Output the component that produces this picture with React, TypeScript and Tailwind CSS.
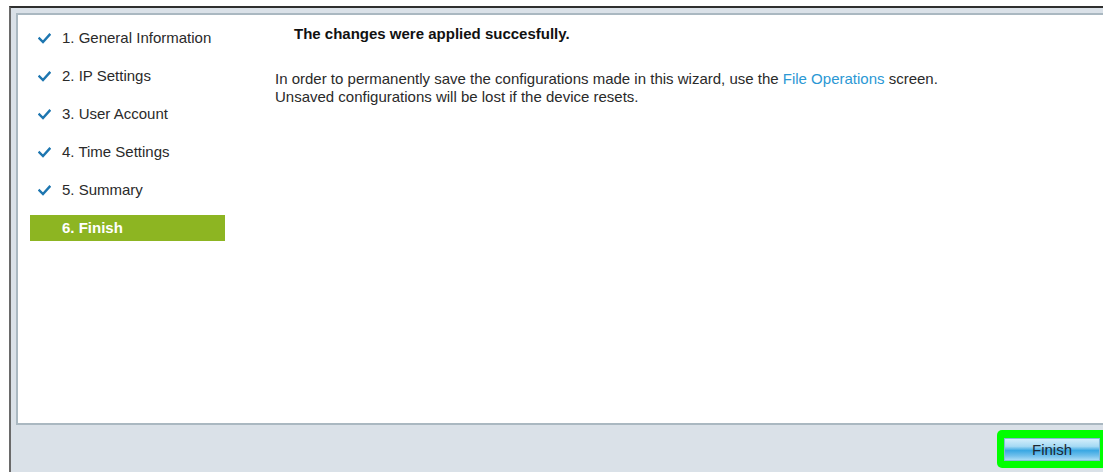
import React from "react";

const steps = [
  "1. General Information",
  "2. IP Settings",
  "3. User Account",
  "4. Time Settings",
  "5. Summary",
];

function Check() {
  return (
    <svg width="13" height="11" viewBox="0 0 13 11" className="shrink-0">
      <path
        d="M1.5 5.5 L5 9 L11.5 1.8"
        fill="none"
        stroke="#1d76b0"
        strokeWidth="2.4"
        strokeLinecap="square"
      />
    </svg>
  );
}

export default function App() {
  return (
    <div
      className="w-[1103px] h-[472px] overflow-hidden bg-white text-[15px] text-[#2a2a2a]"
      style={{ fontFamily: '"Liberation Sans", Arial, sans-serif' }}
    >
      <div className="ml-[9px] mt-[6px] h-[466px] w-[1110px] border-t-2 border-l-2 border-t-[#2f2f2f] border-l-[#6a6a6a] bg-[#dae1e8] pl-[5px] pt-[5px] flex flex-col">
        {/* wizard panel */}
        <div className="h-[412px] w-[1105px] border-2 border-[#aab8c1] bg-white flex">
          <ul className="w-[207px] shrink-0 pl-[12px] pt-[10px] flex flex-col gap-[12px]">
            {steps.map((s) => (
              <li key={s} className="h-[26px] flex items-center pl-[8px] gap-[11px]">
                <Check />
                <span>{s}</span>
              </li>
            ))}
            <li className="h-[26px] w-[195px] flex items-center pl-[32px] bg-[#8db522] text-white font-bold">
              6. Finish
            </li>
          </ul>
          <div className="ml-[50px] pt-[10px]">
            <p className="pl-[19px] leading-[18px] font-bold text-[#111]">
              The changes were applied succesfully.
            </p>
            <p className="mt-[27px] leading-[18px]">
              In order to permanently save the configurations made in this wizard, use the{" "}
              <a className="text-[#2b98d4]">File Operations</a> screen.
              <br />
              Unsaved configurations will be lost if the device resets.
            </p>
          </div>
        </div>
        {/* footer */}
        <div className="pt-[5px] pl-[981px]">
          <div className="h-[38px] w-[120px] rounded-[5px] bg-[#00ff00] pl-[7px] pt-[8px]">
            <button
              className="h-[23px] w-[96px] border border-[#86b9d8] text-[15px] leading-[21px] text-[#1c2733] bg-[linear-gradient(to_bottom,#d3eefb_0%,#a6daf4_35%,#3aa8e3_55%,#71c0ec_80%,#a9dcf5_100%)]"
              style={{ fontFamily: '"Liberation Sans", Arial, sans-serif' }}
            >
              Finish
            </button>
          </div>
        </div>
      </div>
    </div>
  );
}
